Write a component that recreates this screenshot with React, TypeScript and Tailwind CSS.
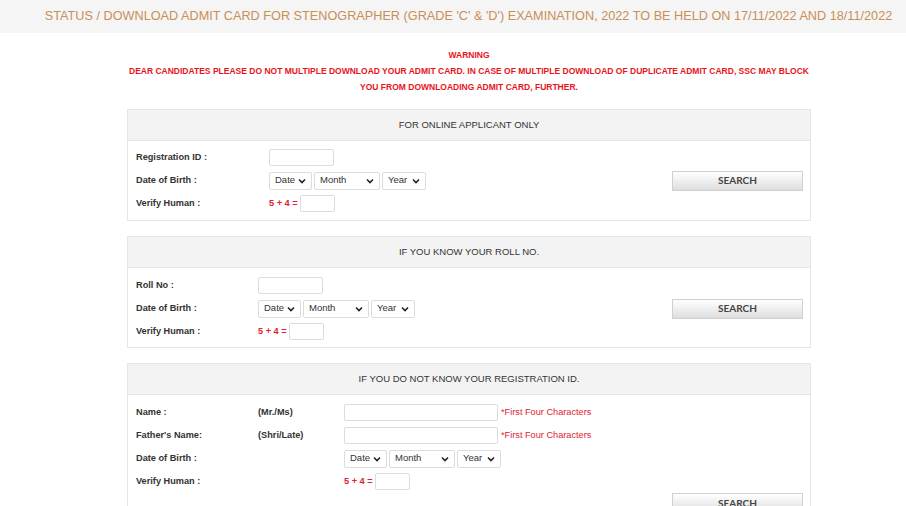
import React from 'react';

const font = { fontFamily: '"Liberation Sans", Arial, sans-serif' };

function Chevron() {
  return (
    <svg width="8" height="6" viewBox="0 0 8 6" className="shrink-0">
      <path d="M1 1.5 L4 4.5 L7 1.5" fill="none" stroke="#222" strokeWidth="1.6" />
    </svg>
  );
}

function Select({ label, width }: { label: string; width: string }) {
  return (
    <div
      className={`flex h-[18px] ${width} items-center justify-between rounded-[2px] border border-[#dcdcdc] bg-white pl-[5px] pr-[5px] text-[9.5px] text-[#333]`}
    >
      <span>{label}</span>
      <Chevron />
    </div>
  );
}

function DobSelects() {
  return (
    <div className="flex items-center gap-[2px]">
      <Select label="Date" width="w-[43px]" />
      <Select label="Month" width="w-[66px]" />
      <Select label="Year" width="w-[44px]" />
    </div>
  );
}

function TextBox({ width }: { width: string }) {
  return <input type="text" className={`h-[17px] ${width} rounded-[2px] border border-[#dcdcdc] bg-white outline-none`} />;
}

function Captcha() {
  return (
    <div className="flex items-center gap-[2px]">
      <span className="text-[9.2px] font-bold text-[#e0232e]">5 + 4 =</span>
      <TextBox width="w-[35px]" />
    </div>
  );
}

function SearchButton() {
  return (
    <button
      className="h-[20px] w-[131px] border border-[#cfcfcf] bg-gradient-to-b from-white to-[#dedede] text-[10px] font-bold text-[#444]"
      style={{ fontFamily: 'Lato, "Open Sans", sans-serif' }}
    >
      SEARCH
    </button>
  );
}

function Label({ children, width }: { children: React.ReactNode; width: string }) {
  return <div className={`${width} shrink-0 text-[9.2px] font-bold text-[#333]`}>{children}</div>;
}

function Panel({ title, children }: { title: string; children: React.ReactNode }) {
  return (
    <div className="ml-[127px] w-[684px] border border-[#e6e6e6] bg-white">
      <div className="flex h-[31px] items-center justify-center border-b border-[#e6e6e6] bg-[#f3f3f3] text-[9.5px] text-[#333]">
        {title}
      </div>
      {children}
    </div>
  );
}

export default function App() {
  return (
    <div className="min-h-[506px] w-[906px] overflow-hidden bg-white" style={font}>
      <div className="flex h-[33px] items-center justify-center bg-[#f5f5f5] pl-[31px] text-[12.7px] text-[#c98f55]">
        STATUS / DOWNLOAD ADMIT CARD FOR STENOGRAPHER (GRADE 'C' &amp; 'D') EXAMINATION, 2022 TO BE HELD ON 17/11/2022 AND 18/11/2022
      </div>

      <div className="ml-[127px] w-[684px] pt-[14px] pb-[14px] text-center text-[8.5px] font-bold leading-[16px] text-[#e8141c]">
        <div>WARNING</div>
        <div>
          DEAR CANDIDATES PLEASE DO NOT MULTIPLE DOWNLOAD YOUR ADMIT CARD. IN CASE OF MULTIPLE DOWNLOAD OF DUPLICATE ADMIT CARD, SSC MAY BLOCK
        </div>
        <div>YOU FROM DOWNLOADING ADMIT CARD, FURTHER.</div>
      </div>

      <div className="flex flex-col gap-[15px]">
        <Panel title="FOR ONLINE APPLICANT ONLY">
          <div className="flex items-center justify-between pl-[8px] pr-[7px] pt-[5px] pb-[5px]">
            <div className="flex flex-col">
              <div className="flex h-[23px] items-center">
                <Label width="w-[133px]">Registration ID :</Label>
                <TextBox width="w-[65px]" />
              </div>
              <div className="flex h-[23px] items-center">
                <Label width="w-[133px]">Date of Birth :</Label>
                <DobSelects />
              </div>
              <div className="flex h-[23px] items-center">
                <Label width="w-[133px]">Verify Human :</Label>
                <Captcha />
              </div>
            </div>
            <SearchButton />
          </div>
        </Panel>

        <Panel title="IF YOU KNOW YOUR ROLL NO.">
          <div className="flex items-center justify-between pl-[8px] pr-[7px] pt-[6px] pb-[4px]">
            <div className="flex flex-col">
              <div className="flex h-[23px] items-center">
                <Label width="w-[122px]">Roll No :</Label>
                <TextBox width="w-[65px]" />
              </div>
              <div className="flex h-[23px] items-center">
                <Label width="w-[122px]">Date of Birth :</Label>
                <DobSelects />
              </div>
              <div className="flex h-[23px] items-center">
                <Label width="w-[122px]">Verify Human :</Label>
                <Captcha />
              </div>
            </div>
            <SearchButton />
          </div>
        </Panel>

        <Panel title="IF YOU DO NOT KNOW YOUR REGISTRATION ID.">
          <div className="flex flex-col pl-[8px] pr-[7px] pt-[6px] pb-[6px]">
            <div className="flex h-[23px] items-center">
              <Label width="w-[122px]">Name :</Label>
              <Label width="w-[86px]">(Mr./Ms)</Label>
              <TextBox width="w-[154px]" />
              <span className="ml-[3px] text-[9.2px] text-[#e0232e]">*First Four Characters</span>
            </div>
            <div className="flex h-[23px] items-center">
              <Label width="w-[122px]">Father's Name:</Label>
              <Label width="w-[86px]">(Shri/Late)</Label>
              <TextBox width="w-[154px]" />
              <span className="ml-[3px] text-[9.2px] text-[#e0232e]">*First Four Characters</span>
            </div>
            <div className="flex h-[23px] items-center">
              <Label width="w-[208px]">Date of Birth :</Label>
              <DobSelects />
            </div>
            <div className="flex h-[23px] items-center">
              <Label width="w-[208px]">Verify Human :</Label>
              <Captcha />
            </div>
            <div className="flex justify-end">
              <SearchButton />
            </div>
          </div>
        </Panel>
      </div>
    </div>
  );
}
